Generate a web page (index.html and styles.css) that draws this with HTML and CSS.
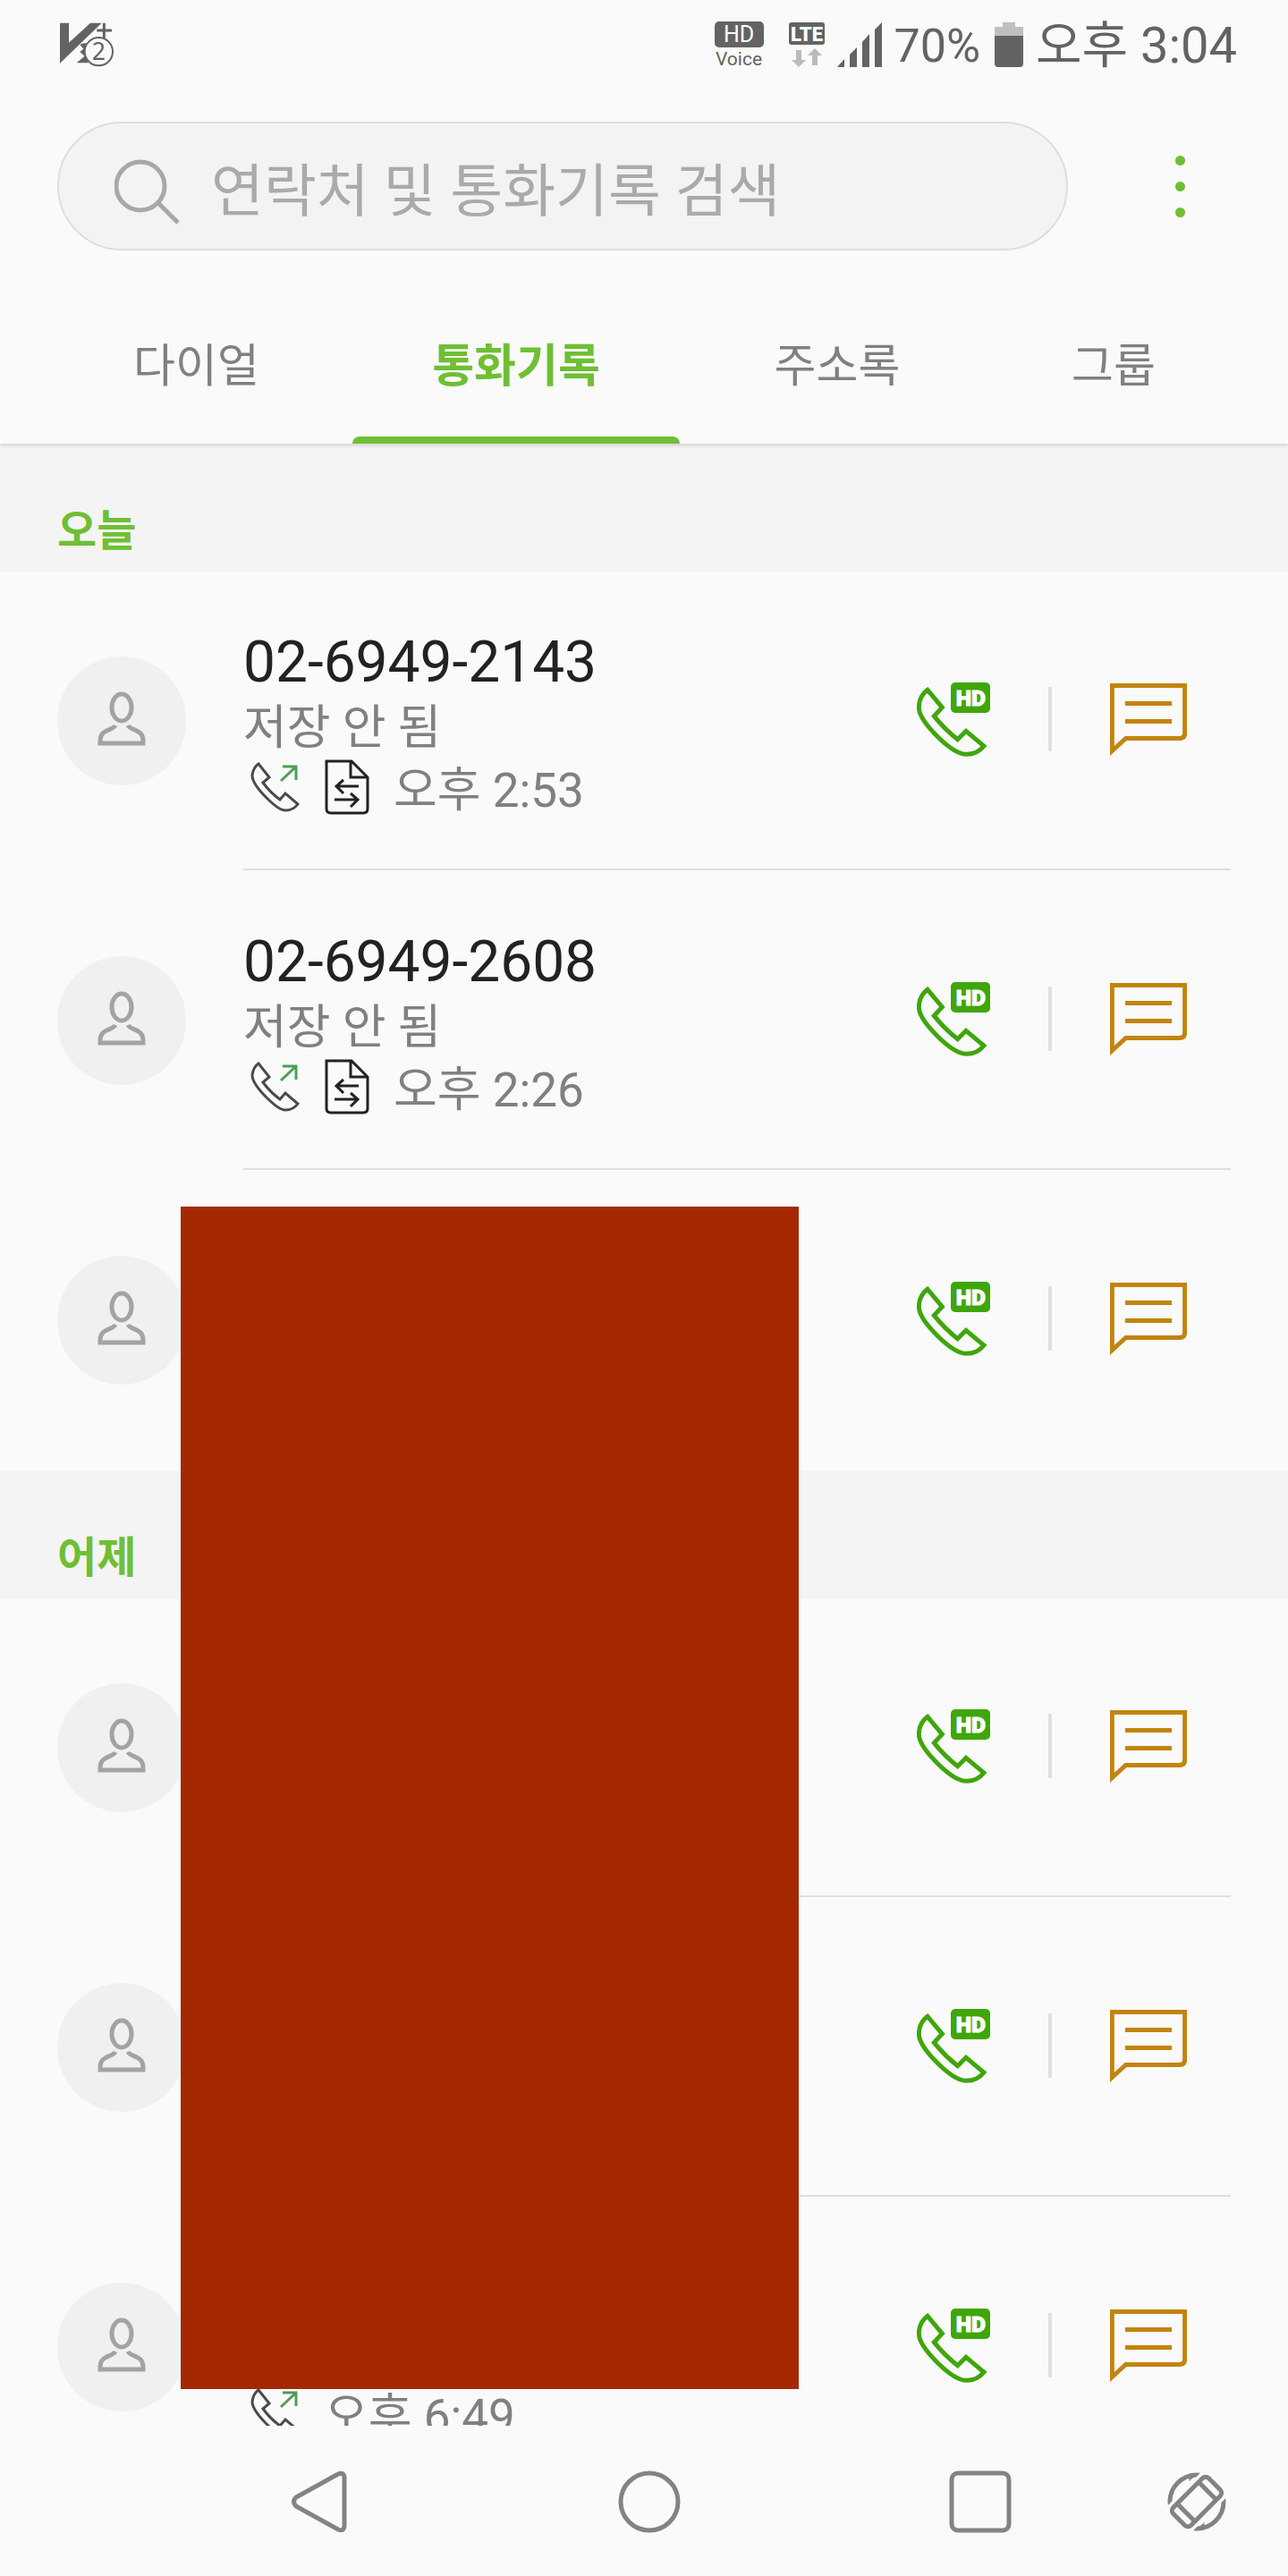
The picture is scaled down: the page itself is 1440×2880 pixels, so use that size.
FILE: index.html
```html
<!DOCTYPE html>
<html lang="ko">
<head>
    <meta charset="UTF-8">
    <meta name="viewport" content="width=device-width, initial-scale=1.0">
    <title>통화기록</title>
    <link rel="stylesheet" href="styles.css">
</head>
<body>
    <!-- 공통 아이콘 -->
    <svg class="icon-defs" aria-hidden="true">
        <symbol id="icon-person" viewBox="0 0 54 62">
            <ellipse cx="27" cy="19" rx="11" ry="15" />
            <path d="M20 39 C17 45 3 43 3 56 V59 H51 V56 C51 43 37 45 34 39" />
        </symbol>
        <symbol id="icon-hd-call" viewBox="135 123 246 249">
            <path d="M171 148 L220 207 L193 236 Q228 280 272 314 L300 286 L360 336 Q338 364 302 364 Q265 364 205 305 Q142 243 142 207 Q142 170 171 148 Z" fill="none" stroke="#3fa60a" stroke-width="15" />
            <rect x="249" y="123" width="132" height="102" rx="15" fill="#3fa60a" />
            <text x="316" y="202" class="hd-text">HD</text>
        </symbol>
        <symbol id="icon-message" viewBox="783 138 258 242">
            <path d="M790 145 H1034 V304 Q1034 322 1014 322 H836 L790 364 Z M834 205 H990 M834 265 H990" fill="none" stroke="#c2840f" stroke-width="15" />
        </symbol>
        <symbol id="icon-outgoing" viewBox="280 849 56 61">
            <path d="M289 854 L301 869 L294 875 Q302 886 313 894 L319 887 L333 899 Q328 906 319 906 Q312 906 298 892 Q282 876 282 867 Q283 858 289 854 Z" fill="none" stroke="#4a4a4a" stroke-width="3" />
            <path d="M316 857 H331 V872 M331 857 L314 873" fill="none" stroke="#4c9d57" stroke-width="3" />
        </symbol>
        <symbol id="icon-file" viewBox="363 849 50 62">
            <path d="M365 851 H393 L411 869 V904 Q411 909 406 909 H370 Q365 909 365 904 Z M392 851 V869 H411 M401 879 H376 M384 872 L376 879 L384 887 M374 894 H400 M392 887 L400 894 L392 902" fill="none" stroke="#222" stroke-width="3" />
        </symbol>
    </svg>

    <div class="phone">
        <header class="header">
            <div class="status-bar">
                <svg class="v3-icon" width="60" height="50" viewBox="201 77 180 150">
                    <path d="M201 79 H231 V145 L303 79 H341 L201 214 Z" />
                    <path d="M231 158 L303 92 L296 120 L270 146 Z" />
                    <path d="M268 152 Q280 142 296 150 V213 H257 L284 190 L268 176 L280 166 Z" />
                    <path d="M349 79 V130 M325 104 H375" stroke="#636363" stroke-width="9" />
                    <circle cx="331" cy="175" r="47" fill="#fafafa" stroke="#636363" stroke-width="6" />
                    <text x="331" y="204" class="v3-count">2</text>
                </svg>
                <div class="status-items">
                    <div class="hd-voice"><span class="hd-badge">HD</span><span>Voice</span></div>
                    <svg width="54" height="50" viewBox="0 0 54 50">
                        <rect x="14" y="0" width="40" height="25" rx="3" fill="#636363" />
                        <text x="34" y="21" class="lte-text">LTE</text>
                        <path d="M22 31 H28 V42 H33 L25 50 L17 42 H22 Z M40 48 H46 V37 H51 L43 29 L35 37 H40 Z" fill="#bbb" />
                    </svg>
                    <svg width="50" height="50" viewBox="0 0 50 50">
                        <path d="M0 50 L8 41 V50 Z M14 50 V36 L22 28 V50 Z M28 50 V22 L36 13 V50 Z M42 50 V8 L50 0 V50 Z" fill="#636363" />
                    </svg>
                    <span class="battery-text">70%</span>
                    <svg width="34" height="50" viewBox="-2 0 34 50">
                        <path d="M9 0 H23 V5 H32 V15 H0 V5 H9 Z" fill="#bfbfbf" />
                        <path d="M0 15 H32 V46 Q32 50 28 50 H4 Q0 50 0 46 Z" fill="#636363" />
                    </svg>
                    <span class="clock">오후 3:04</span>
                </div>
            </div>

            <div class="search-row">
                <label class="search-box">
                    <svg width="74" height="74" viewBox="0 0 74 74" aria-hidden="true">
                        <circle cx="29" cy="30" r="27" />
                        <path d="M49 49 L71 71" />
                    </svg>
                    <input type="search" placeholder="연락처 및 통화기록 검색" aria-label="검색">
                </label>
                <button class="more-button" aria-label="더보기">
                    <span></span>
                    <span></span>
                    <span></span>
                </button>
            </div>

            <nav class="tabs">
                <button class="tab">다이얼</button>
                <button class="tab active">통화기록</button>
                <button class="tab">주소록</button>
                <button class="tab">그룹</button>
            </nav>
        </header>

        <main class="call-log">
            <h2 class="day">오늘</h2>
            <ul class="calls">
                <li class="call">
                    <div class="avatar"><svg><use href="#icon-person" /></svg></div>
                    <div class="call-body">
                        <div class="call-info">
                            <p class="number">02-6949-2143</p>
                            <p class="note">저장 안 됨</p>
                            <p class="time"><svg width="56" height="61"><use href="#icon-outgoing" /></svg><svg width="50" height="62"><use href="#icon-file" /></svg>오후 2:53</p>
                        </div>
                        <div class="actions">
                            <button aria-label="전화"><svg width="82" height="83"><use href="#icon-hd-call" /></svg></button>
                            <span class="separator"></span>
                            <button aria-label="메시지"><svg width="86" height="81"><use href="#icon-message" /></svg></button>
                        </div>
                    </div>
                </li>
                <li class="call">
                    <div class="avatar"><svg><use href="#icon-person" /></svg></div>
                    <div class="call-body">
                        <div class="call-info">
                            <p class="number">02-6949-2608</p>
                            <p class="note">저장 안 됨</p>
                            <p class="time"><svg width="56" height="61"><use href="#icon-outgoing" /></svg><svg width="50" height="62"><use href="#icon-file" /></svg>오후 2:26</p>
                        </div>
                        <div class="actions">
                            <button aria-label="전화"><svg width="82" height="83"><use href="#icon-hd-call" /></svg></button>
                            <span class="separator"></span>
                            <button aria-label="메시지"><svg width="86" height="81"><use href="#icon-message" /></svg></button>
                        </div>
                    </div>
                </li>
                <li class="call">
                    <div class="avatar"><svg><use href="#icon-person" /></svg></div>
                    <div class="call-body">
                        <div class="call-info"></div>
                        <div class="actions">
                            <button aria-label="전화"><svg width="82" height="83"><use href="#icon-hd-call" /></svg></button>
                            <span class="separator"></span>
                            <button aria-label="메시지"><svg width="86" height="81"><use href="#icon-message" /></svg></button>
                        </div>
                    </div>
                </li>
            </ul>

            <h2 class="day">어제</h2>
            <ul class="calls">
                <li class="call">
                    <div class="avatar"><svg><use href="#icon-person" /></svg></div>
                    <div class="call-body">
                        <div class="call-info"></div>
                        <div class="actions">
                            <button aria-label="전화"><svg width="82" height="83"><use href="#icon-hd-call" /></svg></button>
                            <span class="separator"></span>
                            <button aria-label="메시지"><svg width="86" height="81"><use href="#icon-message" /></svg></button>
                        </div>
                    </div>
                </li>
                <li class="call">
                    <div class="avatar"><svg><use href="#icon-person" /></svg></div>
                    <div class="call-body">
                        <div class="call-info"></div>
                        <div class="actions">
                            <button aria-label="전화"><svg width="82" height="83"><use href="#icon-hd-call" /></svg></button>
                            <span class="separator"></span>
                            <button aria-label="메시지"><svg width="86" height="81"><use href="#icon-message" /></svg></button>
                        </div>
                    </div>
                </li>
                <li class="call">
                    <div class="avatar"><svg><use href="#icon-person" /></svg></div>
                    <div class="call-body">
                        <div class="call-info">
                            <p class="number"></p>
                            <p class="note"></p>
                            <p class="time"><svg width="56" height="61"><use href="#icon-outgoing" /></svg>오후 6:49</p>
                        </div>
                        <div class="actions">
                            <button aria-label="전화"><svg width="82" height="83"><use href="#icon-hd-call" /></svg></button>
                            <span class="separator"></span>
                            <button aria-label="메시지"><svg width="86" height="81"><use href="#icon-message" /></svg></button>
                        </div>
                    </div>
                </li>
            </ul>

            <!-- 개인정보 가림막 -->
            <div class="privacy-cover"></div>
        </main>

        <nav class="nav-bar">
            <button aria-label="뒤로">
                <svg width="70" height="70" viewBox="0 0 70 70"><path d="M55 4 L8 30 Q3 35 8 40 L55 66 Q62 69 62 61 V9 Q62 1 55 4 Z" /></svg>
            </button>
            <button aria-label="홈">
                <svg width="70" height="70" viewBox="0 0 70 70"><circle cx="35" cy="35" r="32" /></svg>
            </button>
            <button aria-label="최근 앱">
                <svg width="70" height="70" viewBox="0 0 70 70"><rect x="3" y="3" width="64" height="64" rx="7" /></svg>
            </button>
            <button aria-label="화면 회전">
                <svg width="66" height="66" viewBox="0 0 66 66">
                    <circle cx="33" cy="33" r="30" />
                    <path class="tip" d="M36 1 L24 10 L26 10 L23 6 Z M30 65 L42 56 L40 56 L43 60 Z" />
                    <rect class="halo" x="19" y="-4" width="28" height="74" transform="rotate(45 33 33)" />
                    <rect x="19" y="5" width="28" height="56" rx="5" transform="rotate(45 33 33)" />
                    <path d="M19 16 H47 M19 50 H47" transform="rotate(45 33 33)" />
                </svg>
            </button>
        </nav>
    </div>
</body>
</html>
```

FILE: styles.css
```css
* {
    box-sizing: border-box;
}
body {
    font-family: Roboto, "Noto Sans CJK KR", sans-serif;
    margin: 0;
    background-color: #fafafa;
    color: #808080;
}
button {
    padding: 0;
    border: none;
    background: none;
    font-family: inherit;
    color: inherit;
    cursor: pointer;
}
svg {
    display: block;
    flex-shrink: 0;
}
.icon-defs {
    position: absolute;
    width: 0;
    height: 0;
}
.phone {
    display: flex;
    flex-direction: column;
    height: 100vh;
}

/* 상단 */
.header {
    position: relative;
    z-index: 1;
    background-color: #fafafa;
    box-shadow: 0 2px 4px rgba(0, 0, 0, 0.14);
}
.status-bar {
    display: flex;
    justify-content: space-between;
    align-items: center;
    height: 100px;
    padding: 0 57px 0 67px;
    color: #636363;
}
.v3-icon {
    fill: #636363;
}
.v3-count {
    font-family: "Noto Sans", sans-serif;
    font-size: 80px;
    text-anchor: middle;
}
.status-items {
    display: flex;
    align-items: center;
    gap: 14px;
}
.hd-voice {
    display: flex;
    flex-direction: column;
    align-items: center;
    gap: 2px;
    font-size: 21px;
    line-height: 22px;
}
.hd-badge {
    width: 55px;
    border-radius: 5px;
    background-color: #636363;
    color: #fff;
    font-size: 25px;
    line-height: 29px;
    text-align: center;
}
.lte-text {
    fill: #fff;
    font-size: 22px;
    font-weight: 900;
    text-anchor: middle;
}
.battery-text {
    padding-top: 2px;
    font-size: 52px;
}
.clock {
    padding-top: 2px;
    font-size: 56px;
    line-height: 64px;
}
.search-row {
    display: flex;
    align-items: center;
    gap: 64px;
    padding: 36px 60px 0 64px;
}
.search-box {
    display: flex;
    flex: 1;
    align-items: center;
    gap: 34px;
    height: 144px;
    padding: 14px 62px 0;
    border: 2px solid #dedede;
    border-radius: 72px;
    background-color: #f3f3f3;
}
.search-box svg {
    fill: none;
    stroke: #a8a8a8;
    stroke-width: 5;
}
.search-box input {
    flex: 1;
    min-width: 0;
    height: 96px;
    padding: 0;
    border: none;
    outline: none;
    background: none;
    font-family: inherit;
    font-size: 64px;
    line-height: 96px;
    color: #222;
}
.search-box input::placeholder {
    color: #aaa;
}
.more-button {
    display: flex;
    flex-direction: column;
    align-items: center;
    gap: 18px;
    width: 122px;
}
.more-button span {
    width: 11px;
    height: 11px;
    border-radius: 50%;
    background-color: #6fbf34;
}
.tabs {
    display: grid;
    grid-template-columns: 349fr 366fr 352fr 266fr;
    height: 216px;
    padding: 0 62px 0 45px;
}
.tab {
    display: flex;
    flex-direction: column;
    justify-content: space-between;
    align-items: center;
    padding-top: 100px;
    font-size: 51px;
    line-height: 60px;
}
.tab.active {
    color: #6fbf34;
    font-weight: bold;
}
.tab.active::after {
    content: "";
    width: 100%;
    height: 8px;
    border-radius: 8px 8px 0 0;
    background-color: #6fbf34;
}

/* 통화 목록 */
.call-log {
    position: relative;
    flex: 1;
    min-height: 0;
    overflow: hidden;
}
.day {
    height: 143px;
    margin: 0;
    padding: 68px 64px 0;
    background-color: #f4f4f4;
    color: #6fbf34;
    font-size: 48px;
    line-height: 60px;
}
.calls {
    margin: 0;
    padding: 0;
    list-style: none;
}
.call {
    display: flex;
    align-items: center;
    gap: 64px;
    height: 335px;
    padding: 0 64px 1px;
}
.avatar {
    display: flex;
    justify-content: center;
    align-items: center;
    width: 144px;
    height: 144px;
    padding-bottom: 6px;
    border-radius: 50%;
    background-color: #f0f0f0;
}
.avatar svg {
    width: 54px;
    height: 62px;
    fill: none;
    stroke: #a3a3a3;
    stroke-width: 5;
}
.call-body {
    display: flex;
    flex: 1;
    justify-content: space-between;
    align-self: stretch;
    border-bottom: 2px solid #dfdfdf;
}
.call:last-child .call-body {
    border-bottom-color: transparent;
}
.call-info {
    padding-top: 64px;
}
.call-info p {
    margin: 0;
}
.number {
    height: 76px;
    color: #222;
    font-size: 64px;
    line-height: 76px;
}
.note {
    height: 70px;
    font-size: 53px;
    line-height: 70px;
}
.time {
    display: flex;
    align-items: flex-start;
    gap: 27px;
    padding-left: 8px;
    font-size: 53px;
    line-height: 70px;
}
.actions {
    display: flex;
    align-items: center;
    gap: 65px;
    padding: 0 49px 2px 0;
}
.separator {
    width: 4px;
    height: 72px;
    background-color: #e0e0e0;
}
.hd-text {
    fill: #fff;
    stroke: #fff;
    stroke-width: 3;
    font-size: 74px;
    font-weight: 900;
    text-anchor: middle;
}
.privacy-cover {
    position: absolute;
    top: 853px;
    left: 14%;
    width: 48%;
    height: 1322px;
    background-color: #a42900;
}

/* 하단 내비게이션 */
.nav-bar {
    display: grid;
    grid-template-columns: 368fr 368fr 372fr 112fr;
    align-items: center;
    justify-items: center;
    height: 168px;
    padding: 2px 46px 0 174px;
    background-color: #fafafa;
}
.nav-bar svg {
    fill: none;
    stroke: #838383;
    stroke-width: 5;
}
.nav-bar .tip {
    fill: #838383;
    stroke: none;
}
.nav-bar .halo {
    fill: #fafafa;
    stroke: #fafafa;
    stroke-width: 12;
}
```
